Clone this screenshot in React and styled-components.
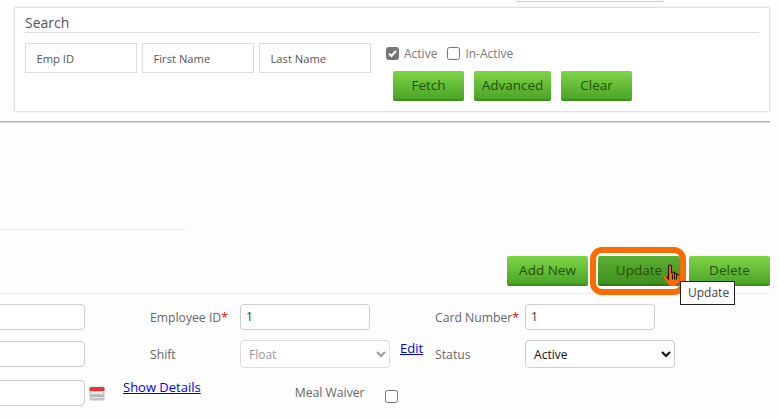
import React from 'react'
import styled, { createGlobalStyle } from 'styled-components'

const Global = createGlobalStyle`
html,body{margin:0;padding:0;background:#fdfdfd;}
body{width:779px;height:419px;overflow:hidden;font-family:"Open Sans","Liberation Sans",sans-serif;color:#666;}
*{box-sizing:border-box;}
`

const Page = styled.div`
width:779px;
height:419px;
overflow:hidden;
`
const TopSliver = styled.div`
width:148px;
height:2px;
margin-left:516px;
border:1px solid #ccc;
border-top:none;
border-radius:0 0 4px 4px;
background:#fff;
`
const TopArea = styled.div`
width:770px;
height:122px;
border-bottom:1px solid #a4b0b2;
box-shadow:0 1px 0 #d5dcdc;
`
const SearchCard = styled.section`
width:756px;
height:105px;
margin:5px 0 0 14px;
padding:7px 10px 0 10px;
background:#fff;
border:1px solid #e0e0e0;
border-radius:2px;
box-shadow:0 0 2px rgba(0,0,0,.12);
`
const CardTitle = styled.div`
height:18px;
border-bottom:1px solid #ddd;
font-size:14px;
line-height:16px;
color:#555;
`
const SearchBody = styled.div`
display:flex;
margin-top:10px;
`
const SearchField = styled.div`
width:112px;
height:30px;
margin-right:5px;
padding-left:10.5px;
padding-top:1px;
border:1px solid #ddd;
font-size:11.2px;
line-height:28px;
color:#555;
background:#fff;
`
const SearchSide = styled.div`
margin-left:10px;
`
const Checks = styled.div`
display:flex;
align-items:center;
height:23px;
margin-top:-1px;
font-size:12px;
color:#777;
`
const Box = styled.span`
display:inline-flex;
align-items:center;
justify-content:center;
width:13px;
height:13px;
margin-left:${p=>p.$ml||0}px;
margin-right:${p=>p.$mr??5}px;
margin-top:${p=>p.$mt||0}px;
border:1px solid #767676;
border-radius:2.5px;
background:${p=>p.$on?'#767676':'#fff'};
`
const Fetches = styled.div`
display:flex;
gap:10px;
margin:6px 0 0 7px;
`
const GreenButton = styled.button`
display:block;
width:${p=>p.$w}px;
height:30px;
padding:0;
border:none;
border-bottom:2px solid ${p=>p.$hover?'#2f7a14':'#3d8f1c'};
border-radius:2px;
background:${p=>p.$hover?'linear-gradient(#5bb131,#3f8e1e)':'linear-gradient(#7fd546,#4ca428)'};
font-family:inherit;
font-size:13.5px;
font-weight:500;
color:#264f08;
`
const MiddleArea = styled.div`
height:108px;
display:flex;
align-items:flex-end;
`
const FaintLine = styled.div`
width:187px;
height:1px;
background:#ececec;
`
const ActionBar = styled.div`
display:flex;
justify-content:flex-end;
width:770px;
height:64px;
padding-top:26px;
border-bottom:1px solid #ececec;
`
const ActionGroup = styled.div`
display:flex;
gap:10px;
`
const UpdateWrap = styled.div`
position:relative;
margin-right:-1px;
`
const Ring = styled.div`
position:absolute;
left:-8px;
top:-9px;
width:96px;
height:48px;
border:6px solid #fa6a05;
border-radius:12px;
pointer-events:none;
`
const Tip = styled.div`
position:absolute;
left:82px;
top:25px;
width:55px;
height:24px;
padding-left:7px;
border:1px solid #222;
background:#fff;
font-size:12px;
line-height:22px;
color:#444;
z-index:2;
`
const Hand = styled.svg`
position:absolute;
left:65px;
top:8px;
width:18px;
height:24px;
z-index:3;
`
const Form = styled.div`
padding-top:10px;
`
const Row = styled.div`
display:flex;
align-items:center;
height:${p=>p.$h}px;
margin-bottom:${p=>p.$mb||0}px;
`
const LeftInput = styled.div`
width:95px;
height:26px;
margin-left:-10px;
border:1px solid #ccc;
border-radius:4px;
background:#fff;
`
const Label = styled.label`
width:${p=>p.$w}px;
margin-left:${p=>p.$ml||0}px;
padding-top:${p=>p.$pt??2}px;
font-size:12.2px;
line-height:16px;
color:#666;
`
const Star = styled.span`
color:#e01010;
`
const TextInput = styled.div`
width:130px;
height:26px;
padding-left:5px;
border:1px solid #ccc;
border-radius:4px;
background:#fff;
font-size:12px;
line-height:24px;
color:#333;
`
const SelectBox = styled.select`
width:150px;
height:28px;
padding-left:4px;
border:1px solid ${p=>p.disabled?'#ddd':'#ccc'};
border-radius:4px;
background-color:#fff;
font-family:inherit;
font-size:12px;
color:${p=>p.disabled?'#999':'#111'};
opacity:1;
`
const BlueLink = styled.a`
margin-left:${p=>p.$ml||0}px;
margin-bottom:${p=>p.$lift||0}px;
font-size:13px;
color:#0000ee;
text-decoration:underline;
`
const CalendarIcon = styled.svg`
width:16px;
height:16px;
margin-left:4px;
`

const Check = () => (
  <svg width="9" height="9" viewBox="0 0 9 9"><path d="M1 4.6 L3.4 7 L8 1.8" fill="none" stroke="#fff" strokeWidth="2"/></svg>
)

export default function App(){
  return (
    <Page>
      <Global/>
      <TopArea>
        <TopSliver/>
        <SearchCard>
          <CardTitle>Search</CardTitle>
          <SearchBody>
            <SearchField>Emp ID</SearchField>
            <SearchField>First Name</SearchField>
            <SearchField>Last Name</SearchField>
            <SearchSide>
              <Checks>
                <Box $on><Check/></Box>Active
                <Box $ml={10}/>In-Active
              </Checks>
              <Fetches>
                <GreenButton $w={71}>Fetch</GreenButton>
                <GreenButton $w={77}>Advanced</GreenButton>
                <GreenButton $w={71}>Clear</GreenButton>
              </Fetches>
            </SearchSide>
          </SearchBody>
        </SearchCard>
      </TopArea>
      <MiddleArea><FaintLine/></MiddleArea>
      <ActionBar>
        <ActionGroup>
          <GreenButton $w={81}>Add New</GreenButton>
          <UpdateWrap>
            <GreenButton $w={82} $hover>Update</GreenButton>
            <Ring/>
            <Tip>Update</Tip>
            <Hand viewBox="0 0 18 24">
              <path d="M5.5 2 C5.5 .6 8.5 .6 8.5 2 L8.5 9 L10 9 L10 8.6 C10 7.8 11.6 7.8 11.6 8.8 L11.6 10 C12 9 13.6 9 13.6 10.2 L13.6 11 C14.2 10.2 15.6 10.4 15.6 11.6 L15.6 16 C15.6 19 14 21.5 11 21.5 L8.5 21.5 C6.5 21.5 5.5 20 4.5 18 L1.5 13.5 C.8 12.2 2.4 11.2 3.4 12.2 L5.5 15 Z" fill="#fa6a05" stroke="#fa6a05" strokeWidth="1"/>
              <path d="M3.4 12.2 L5.5 15 V2 C5.5 .6 8.5 .6 8.5 2 V9 H10 V8.8 C10 7.8 11.6 7.8 11.6 8.8 V10 C12 9 13.6 9 13.6 10.2 V11 C14.2 10.2 15.6 10.4 15.6 11.6" fill="none" stroke="#1c1208" strokeWidth="1.1"/>
              <path d="M9.5 10.5 V15.5 M11.5 10.5 V15.5 M13.5 11 V15.5" stroke="#1c1208" strokeWidth="1.1"/>
            </Hand>
          </UpdateWrap>
          <GreenButton $w={81}>Delete</GreenButton>
        </ActionGroup>
      </ActionBar>
      <Form>
        <Row $h={26} $mb={10}>
          <LeftInput/>
          <Label $w={90} $ml={65}>Employee ID<Star>*</Star></Label>
          <TextInput>1</TextInput>
          <Label $w={90} $ml={65}>Card Number<Star>*</Star></Label>
          <TextInput>1</TextInput>
        </Row>
        <Row $h={28} $mb={12}>
          <LeftInput/>
          <Label $w={90} $ml={65}>Shift</Label>
          <SelectBox disabled defaultValue="Float"><option>Float</option></SelectBox>
          <BlueLink $ml={10} $lift={12}>Edit</BlueLink>
          <Label $w={90} $ml={12}>Status</Label>
          <SelectBox defaultValue="Active"><option>Active</option></SelectBox>
        </Row>
        <Row $h={26}>
          <LeftInput/>
          <CalendarIcon viewBox="0 0 16 16">
            <rect x="0.5" y="2" width="15" height="13.5" rx="1.5" fill="#c4c4c4"/>
            <rect x="0.5" y="2" width="15" height="4" rx="1" fill="#d8393c"/>
            <rect x="2" y="7" width="12" height="6" fill="#e6e6e6"/>
            <path d="M3 12 V9.5 M5 12 V9 M7 12 V9.5 M9 12 V9 M11 12 V9.5 M13 12 V9.5" stroke="#999" strokeWidth="1.2"/>
            <path d="M4 1 V3 M12 1 V3" stroke="#999" strokeWidth="1.2"/>
          </CalendarIcon>
          <BlueLink $ml={18} $lift={12}>Show Details</BlueLink>
          <Label $w={90} $ml={94} $pt={0}>Meal Waiver</Label>
          <Box $mr={0} $mt={6}/>
        </Row>
      </Form>
    </Page>
  )
}
